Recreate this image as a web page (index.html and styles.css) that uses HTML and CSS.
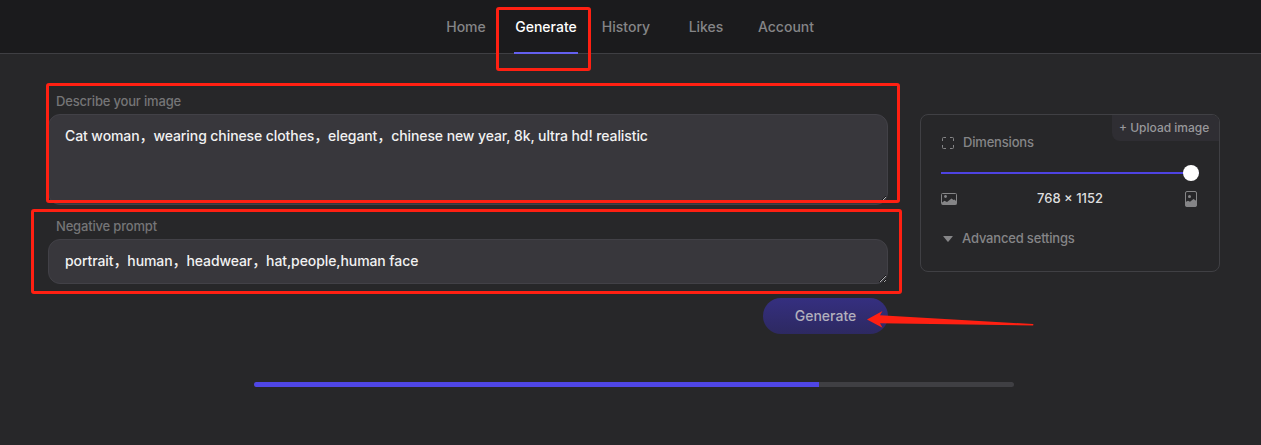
FILE: index.html
```html
<!DOCTYPE html>
<html lang="en">
<head>
    <meta charset="UTF-8">
    <meta name="viewport" content="width=device-width, initial-scale=1.0">
    <title>Generate</title>
    <link rel="stylesheet" href="styles.css">
</head>
<body>

    <!-- Top navigation -->
    <header class="header">
        <nav class="nav">
            <a class="nav-link">Home</a>
            <a class="nav-link active">Generate</a>
            <a class="nav-link">History</a>
            <a class="nav-link">Likes</a>
            <a class="nav-link">Account</a>
        </nav>
    </header>

    <main class="content">
        <!-- Prompt form -->
        <form class="prompt-form">
            <label class="label" for="prompt">Describe your image</label>
            <textarea class="field field-prompt" id="prompt" spellcheck="false">Cat woman，wearing chinese clothes，elegant，chinese new year, 8k, ultra hd! realistic</textarea>

            <label class="label" for="negative">Negative prompt</label>
            <textarea class="field field-negative" id="negative" spellcheck="false">portrait，human，headwear，hat,people,human face</textarea>

            <button class="generate-button" type="button">Generate</button>
        </form>

        <!-- Settings panel -->
        <aside class="settings">
            <div class="upload">+ Upload image</div>
            <div class="row dimensions">
                <svg width="12" height="12" viewBox="0 0 12 12" fill="none" stroke="currentColor">
                    <path d="M.5 4V1.5a1 1 0 0 1 1-1H4M8 .5h2.5a1 1 0 0 1 1 1V4M11.5 8v2.5a1 1 0 0 1-1 1H8M4 11.5H1.5a1 1 0 0 1-1-1V8"/>
                </svg>
                <span>Dimensions</span>
            </div>
            <div class="slider"><div class="slider-thumb"></div></div>
            <div class="size-row">
                <svg width="16" height="12" viewBox="0 0 16 12" fill="none">
                    <rect x=".5" y=".5" width="15" height="11" rx="1" stroke="currentColor"/>
                    <circle cx="4.5" cy="3.5" r="1.4" fill="currentColor"/>
                    <path d="M1 11.500V9.500L3.500 7.800 6 9l4.500-3.500L12.500 7l1-.5L15.500 8.500v3z" fill="currentColor"/>
                </svg>
                <span class="size-value">768 × 1152</span>
                <svg width="12" height="16" viewBox="0 0 12 16" fill="none">
                    <rect x=".5" y=".5" width="11" height="15" rx="1.500" stroke="currentColor"/>
                    <circle cx="4.500" cy="5.500" r="1.500" fill="currentColor"/>
                    <path d="M.5 15.500V11L3 9.800l2 1L8.500 8 11.500 10v5.500z" fill="currentColor"/>
                </svg>
            </div>
            <div class="row advanced">
                <svg width="10" height="6" viewBox="0 0 10 6"><path d="M.6 0h8.800q.6 0 .2.500L5.500 5.600q-.5.600-1 0L.4.500Q0 0 .6 0z" fill="currentColor"/></svg>
                <span>Advanced settings</span>
            </div>
        </aside>
    </main>

    <!-- Generation progress -->
    <div class="progress"><div class="progress-bar"></div></div>

    <!-- Highlights -->
    <div class="mark mark-nav"></div>
    <div class="mark mark-prompt"></div>
    <div class="mark mark-negative"></div>
    <svg class="arrow" width="168" height="18" viewBox="0 0 168 18">
        <path d="M0 9.500L15.500 1l-2.500 4.200L166 14q1 .8 0 1.500L13 13.300l2.500 4.500z" fill="#ff2012"/>
    </svg>

</body>
</html>
```
FILE: styles.css
```css
* {
    box-sizing: border-box;
}

body {
    margin: 0;
    height: 445px;
    overflow: hidden;
    background: #272729;
    color: #858587;
    font-family: Inter, 'Noto Sans CJK SC', sans-serif;
    font-size: 14px;
    font-weight: 500;
}

/* Navigation */
.header {
    height: 54px;
    background: #1b1b1d;
    border-bottom: 1px solid #3f3f43;
}

.nav {
    display: grid;
    grid-template-columns: 64px 96px 64px 96px 64px;
    justify-content: center;
    padding-right: 9px;
}

.nav-link {
    height: 54px;
    line-height: 54px;
    text-align: center;
    justify-self: center;
}

.nav-link.active {
    width: 64px;
    color: #fff;
    border-bottom: 2px solid #6460ef;
}

/* Prompt form */
.content {
    display: flex;
    gap: 32px;
    padding: 38px 41px 0 48px;
}

.prompt-form {
    display: flex;
    flex-direction: column;
    width: 840px;
}

.label {
    height: 22px;
    padding-left: 8px;
    line-height: 19px;
    font-size: 13px;
    letter-spacing: -0.18px;
    color: #757577;
}

.field {
    display: block;
    width: 100%;
    padding: 9px 16px;
    border: 1px solid #424147;
    border-radius: 12px;
    outline: none;
    background: #38373c;
    color: #f1f1f2;
    font: inherit;
    line-height: 24px;
    letter-spacing: -0.09px;
    resize: vertical;
    overflow: hidden;
}

.field-prompt {
    height: 91px;
    margin-bottom: 12px;
}

.field-negative {
    height: 45px;
}

.generate-button {
    align-self: flex-end;
    width: 125px;
    height: 36px;
    margin-top: 14px;
    padding: 0 0 2px;
    border: none;
    border-radius: 18px;
    background: linear-gradient(#352f80, #2d2961);
    color: #b2b0bd;
    font: inherit;
}

/* Settings */
.settings {
    position: relative;
    width: 300px;
    height: 158px;
    margin-top: 22px;
    padding: 19px 20px;
    border: 1px solid #404044;
    border-radius: 8px;
    font-size: 13px;
}

.upload {
    position: absolute;
    top: 0;
    right: 0;
    width: 107px;
    height: 26px;
    padding-left: 7px;
    border-radius: 0 7px 0 8px;
    background: #2f2e33;
    color: #98989b;
    font-size: 12px;
    line-height: 26px;
}

.row {
    display: flex;
    align-items: center;
    height: 18px;
    letter-spacing: -0.18px;
}

.row span,
.size-value {
    padding-bottom: 2px;
}

.dimensions {
    gap: 9px;
    padding-left: 1px;
}

.slider {
    display: flex;
    justify-content: flex-end;
    align-items: center;
    width: 258px;
    height: 2px;
    margin-top: 20px;
    background: #4e43e2;
}

.slider-thumb {
    flex: none;
    width: 16px;
    height: 16px;
    border-radius: 50%;
    background: #fff;
}

.size-row {
    display: flex;
    align-items: center;
    justify-content: space-between;
    height: 18px;
    margin-top: 16px;
    padding-right: 2px;
}

.size-value {
    margin-right: 2px;
    color: #dededf;
}

.advanced {
    gap: 9px;
    margin-top: 22px;
    padding-left: 2px;
}

/* Progress */
.progress {
    width: 760px;
    height: 5px;
    margin: 48px 0 0 254px;
    border-radius: 3px;
    background: #3f3f43;
    overflow: hidden;
}

.progress-bar {
    width: 565px;
    height: 100%;
    background: #4f46e5;
}

/* Highlights drawn over the page */
.mark {
    position: absolute;
    border: 3px solid #ff2012;
    border-radius: 3px;
}

.mark-nav {
    left: 496px;
    top: 7px;
    width: 95px;
    height: 64px;
}

.mark-prompt {
    left: 46px;
    top: 83px;
    width: 854px;
    height: 120px;
}

.mark-negative {
    left: 31px;
    top: 209px;
    width: 871px;
    height: 85px;
}

.arrow {
    position: absolute;
    left: 867px;
    top: 310px;
}
```
